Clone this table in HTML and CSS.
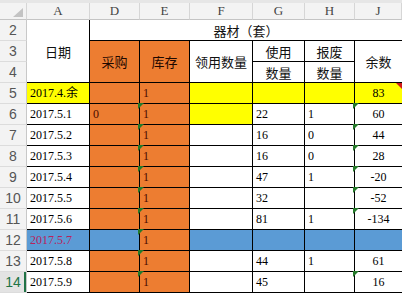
FILE: index.html
```html
<!DOCTYPE html>
<html lang="zh">
<head>
<meta charset="utf-8">
<title>器材（套）</title>
<link rel="stylesheet" href="styles.css">
</head>
<body>
<div class="strip"></div>
<div class="sheet">
  <div class="ch corner"><svg width="10" height="9" viewBox="0 0 10 9"><polygon points="10,0 10,9 0,9" fill="#c3c3c3"/></svg></div>
  <div class="ch">A</div>
  <div class="ch">D</div>
  <div class="ch">E</div>
  <div class="ch">F</div>
  <div class="ch">G</div>
  <div class="ch">H</div>
  <div class="ch">J</div>

  <div class="rh">2</div>
  <div class="c t date">日期</div>
  <div class="c t group">器材（套）</div>

  <div class="rh">3</div>
  <div class="c t o tall">采购</div>
  <div class="c t o tall">库存</div>
  <div class="c t tall">领用数量</div>
  <div class="c t">使用</div>
  <div class="c t">报废</div>
  <div class="c t j tall">余数</div>

  <div class="rh">4</div>
  <div class="c t">数量</div>
  <div class="c t">数量</div>

  <div class="rh">5</div>
  <div class="c y">2017.4.余</div>
  <div class="c o"></div>
  <div class="c o n">1</div>
  <div class="c y"></div>
  <div class="c y"></div>
  <div class="c y"></div>
  <div class="c y j num note">83</div>

  <div class="rh">6</div>
  <div class="c">2017.5.1</div>
  <div class="c o n">0</div>
  <div class="c o n flag">1</div>
  <div class="c y"></div>
  <div class="c">22</div>
  <div class="c">1</div>
  <div class="c j num flag">60</div>

  <div class="rh">7</div>
  <div class="c">2017.5.2</div>
  <div class="c o"></div>
  <div class="c o n flag">1</div>
  <div class="c"></div>
  <div class="c">16</div>
  <div class="c">0</div>
  <div class="c j num flag">44</div>

  <div class="rh">8</div>
  <div class="c">2017.5.3</div>
  <div class="c o"></div>
  <div class="c o n flag">1</div>
  <div class="c"></div>
  <div class="c">16</div>
  <div class="c">0</div>
  <div class="c j num flag">28</div>

  <div class="rh">9</div>
  <div class="c">2017.5.4</div>
  <div class="c o"></div>
  <div class="c o n flag">1</div>
  <div class="c"></div>
  <div class="c">47</div>
  <div class="c">1</div>
  <div class="c j num flag">-20</div>

  <div class="rh">10</div>
  <div class="c">2017.5.5</div>
  <div class="c o"></div>
  <div class="c o n flag">1</div>
  <div class="c"></div>
  <div class="c">32</div>
  <div class="c"></div>
  <div class="c j num flag">-52</div>

  <div class="rh">11</div>
  <div class="c">2017.5.6</div>
  <div class="c o"></div>
  <div class="c o n flag">1</div>
  <div class="c"></div>
  <div class="c">81</div>
  <div class="c">1</div>
  <div class="c j num flag">-134</div>

  <div class="rh">12</div>
  <div class="c b red">2017.5.7</div>
  <div class="c b"></div>
  <div class="c o n flag">1</div>
  <div class="c b"></div>
  <div class="c b"></div>
  <div class="c b"></div>
  <div class="c b j"></div>

  <div class="rh">13</div>
  <div class="c">2017.5.8</div>
  <div class="c o"></div>
  <div class="c o n flag">1</div>
  <div class="c"></div>
  <div class="c">44</div>
  <div class="c">1</div>
  <div class="c j num">61</div>

  <div class="rh sel">14</div>
  <div class="c">2017.5.9</div>
  <div class="c o"></div>
  <div class="c o n flag">1</div>
  <div class="c"></div>
  <div class="c">45</div>
  <div class="c"></div>
  <div class="c j num flag">16</div>
</div>
</body>
</html>
```

FILE: styles.css
```css
html, body {
  margin: 0;
  padding: 0;
  background: #ffffff;
  overflow: hidden;
}

.strip {
  height: 3px;
  background: #e6e6e6;
}

.sheet {
  display: grid;
  grid-template-columns: 27px 63px 50px 50px 63px 52px 50px 47px;
  grid-template-rows: 17px repeat(13, 21px);
  font-family: "Liberation Serif", "Noto Sans CJK SC", serif;
  font-size: 12px;
  color: #000;
}

.sheet > div {
  box-sizing: border-box;
}

.ch {
  background: #f3f3f3;
  border-right: 1px solid #d6d6d6;
  border-bottom: 1px solid #c4c4c4;
  display: flex;
  align-items: center;
  justify-content: center;
  font-family: "Liberation Serif", serif;
  font-size: 13px;
  color: #444;
}

.corner {
  justify-content: flex-end;
  align-items: flex-end;
  padding: 0 3px 2px 0;
}

.corner svg {
  display: block;
}

.rh {
  background: #f3f3f3;
  border-right: 1px solid #c8c8c8;
  border-bottom: 1px solid #dcdcdc;
  display: flex;
  align-items: center;
  justify-content: center;
  font-family: "Liberation Sans", sans-serif;
  font-size: 14px;
  color: #555;
}

.rh.sel {
  background: #e3e3e3;
  color: #217346;
  box-shadow: inset -2px 0 0 #217346;
}

.c {
  position: relative;
  border-right: 1px solid #000;
  border-bottom: 1px solid #000;
  padding-left: 3px;
  line-height: 20px;
  white-space: nowrap;
}

.t {
  display: flex;
  align-items: center;
  justify-content: center;
  padding-left: 0;
  font-family: "Noto Sans CJK SC", sans-serif;
  font-size: 13px;
  line-height: 1;
  color: #111;
}

.date {
  grid-row: span 3;
}

.group {
  grid-column: span 6;
  border-right: none;
}

.tall {
  grid-row: span 2;
}

.j {
  border-right: none;
}

.num {
  text-align: center;
  padding-left: 0;
}

.o {
  background: #ed7d31;
}

.o.t {
  color: #1e0800;
}

.n {
  color: #4a0a00;
}

.y {
  background: #ffff00;
}

.b {
  background: #5b9bd5;
}

.red {
  color: #b8225c;
}

.flag::before {
  content: "";
  position: absolute;
  top: -1px;
  left: -2px;
  border-top: 6px solid #257a2a;
  border-right: 6px solid transparent;
}

.note::after {
  content: "";
  position: absolute;
  top: 0;
  right: 0;
  border-top: 6px solid #d11a1a;
  border-left: 6px solid transparent;
}
```
